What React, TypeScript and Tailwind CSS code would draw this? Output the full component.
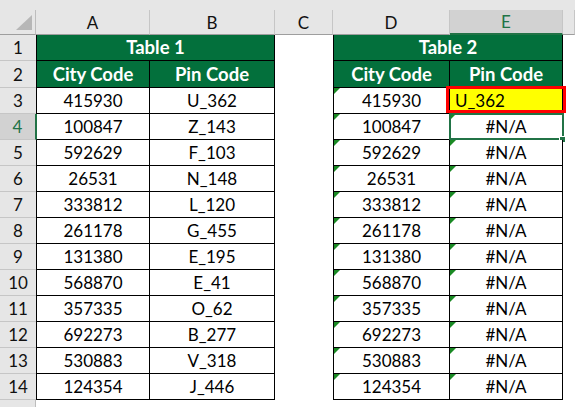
import React from "react"

const rows: [string, string, string][] = [
  ["415930", "U_362", "U_362"],
  ["100847", "Z_143", "#N/A"],
  ["592629", "F_103", "#N/A"],
  ["26531", "N_148", "#N/A"],
  ["333812", "L_120", "#N/A"],
  ["261178", "G_455", "#N/A"],
  ["131380", "E_195", "#N/A"],
  ["568870", "E_41", "#N/A"],
  ["357335", "O_62", "#N/A"],
  ["692273", "B_277", "#N/A"],
  ["530883", "V_318", "#N/A"],
  ["124354", "J_446", "#N/A"],
]

const cols = ["A", "B", "C", "D", "E", ""]

// little green error flag in the top-left corner of a cell
const Flag = () => (
  <span className="absolute top-0 left-0 w-0 h-0 border-t-[6px] border-r-[6px] border-t-[#1a8a24] border-r-transparent" />
)

const RowHead = ({ n }: { n: number }) => {
  const sel = n === 4
  return (
    <div
      className={
        "flex items-center justify-center border-b border-b-[#c6c6c6] " +
        (sel ? "bg-[#d2d2d2] text-[#217346] border-r border-r-[#217346]" : "bg-[#e6e6e6] text-[#111]")
      }
    >
      {n}
    </div>
  )
}

const green = "bg-[#03703c] text-white font-bold text-[18.5px] flex items-center justify-center border-r border-b border-black"
const data = "relative bg-white flex items-center justify-center border-r border-b border-black"

export default function App() {
  return (
    <div
      className="w-[575px] h-[407px] overflow-hidden bg-white grid grid-cols-[36px_114px_125px_58px_117px_113px_1fr] grid-rows-[35px_26px_27px_repeat(12,26px)_1fr] text-[17px] leading-none"
      style={{ fontFamily: "Lato, 'Liberation Sans', sans-serif" }}
    >
      {/* corner */}
      <div className="bg-[#e6e6e6] flex flex-col">
        <div className="mt-[10px] flex-1 border-r border-r-[#bdbdbd] border-b border-b-[#9e9e9e] relative">
          <svg className="absolute right-[3px] bottom-[4px]" width="16" height="15" viewBox="0 0 16 15">
            <polygon points="16,0 16,15 0,15" fill="#b7b7b7" />
          </svg>
        </div>
      </div>
      {/* column headers */}
      {cols.map((c, i) => (
        <div key={i} className="bg-[#e6e6e6] flex flex-col">
          <div
            className={
              "mt-[10px] flex-1 flex items-center justify-center border-r border-r-[#c6c6c6] " +
              (c === "E"
                ? "bg-[#d2d2d2] text-[#217346] border-b-2 border-b-[#217346]"
                : "text-[#111] border-b border-b-[#9e9e9e]")
            }
          >
            {c}
          </div>
        </div>
      ))}

      {/* row 1 */}
      <RowHead n={1} />
      <div className={green + " col-span-2 border-l"}>Table 1</div>
      <div />
      <div className={green + " col-span-2 border-l"}>Table 2</div>
      <div />

      {/* row 2 */}
      <RowHead n={2} />
      <div className={green + " border-l"}>City Code</div>
      <div className={green}>Pin Code</div>
      <div />
      <div className={green + " border-l"}>City Code</div>
      <div className={green}>Pin Code</div>
      <div />

      {rows.map(([city, pin, look], i) => {
        const n = i + 3
        return (
          <React.Fragment key={n}>
            <RowHead n={n} />
            <div className={data + (n === 4 ? " border-l border-l-[#217346]" : " border-l")}>{city}</div>
            <div className={data}>{pin}</div>
            <div className="bg-white" />
            <div className={data + " border-l"}>
              <Flag />
              {city}
            </div>
            {n === 3 ? (
              <div className="relative bg-[#ffff00] flex items-center justify-start pl-[5px] border-r border-b border-black">
                {look}
                <span className="absolute -left-[4px] -right-[4px] -top-[2px] bottom-0 border-[3px] border-[#ff0000]" />
              </div>
            ) : (
              <div className={data}>
                <Flag />
                {look}
                {n === 4 && (
                  <>
                    <span className="absolute -left-[1px] -right-[2px] -top-[1px] -bottom-[1px] border-2 border-[#217346]" />
                    <span className="absolute -right-[4px] -bottom-[4px] w-[7px] h-[7px] bg-[#217346] border border-white" />
                  </>
                )}
              </div>
            )}
            <div className="bg-white" />
          </React.Fragment>
        )
      })}

      {/* partial row below */}
      <div className="bg-[#e6e6e6] border-r border-r-[#bdbdbd]" />
      <div className="col-span-6 bg-white" />
    </div>
  )
}
